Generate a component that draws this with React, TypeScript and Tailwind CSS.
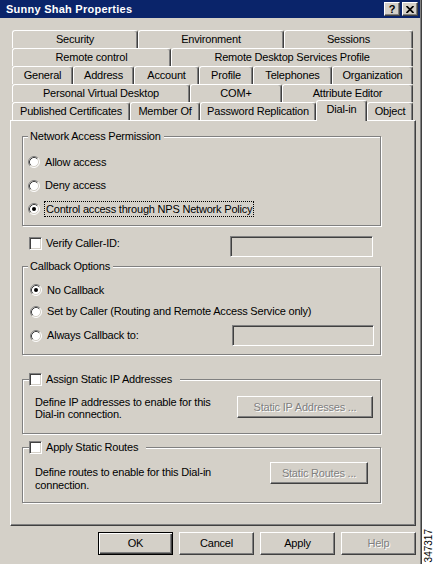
import React from 'react'

const raised =
  'border border-t-white border-l-white border-r-[#404040] border-b-[#404040] shadow-[inset_-1px_-1px_0_#808080]'
const sunken =
  'border border-t-[#808080] border-l-[#808080] border-r-white border-b-white shadow-[inset_1px_1px_0_#404040,inset_-1px_-1px_0_#d4d0c8]'
const etched = 'border border-[#808080] shadow-[1px_1px_0_#fff,inset_1px_1px_0_#fff]'
const disabledText = 'text-[#808080] [text-shadow:1px_1px_0_#fff]'

const Radio = ({ checked }: { checked?: boolean }) => (
  <svg width="12" height="12" viewBox="0 0 12 12" className="shrink-0">
    <circle cx="6" cy="6" r="5" fill="#fff" />
    <path d="M2.11 9.89 A5.5 5.5 0 0 1 9.89 2.11" fill="none" stroke="#808080" />
    <path d="M9.89 2.11 A5.5 5.5 0 0 1 2.11 9.89" fill="none" stroke="#fff" />
    <path d="M2.82 9.18 A4.5 4.5 0 0 1 9.18 2.82" fill="none" stroke="#404040" />
    <path d="M9.18 2.82 A4.5 4.5 0 0 1 2.82 9.18" fill="none" stroke="#d4d0c8" />
    {checked && <circle cx="6" cy="6" r="2" fill="#000" />}
  </svg>
)

const Checkbox = () => <div className={`w-[13px] h-[13px] shrink-0 bg-white ${sunken}`} />

const Tab = ({
  label,
  width,
  active,
}: {
  label: string
  width: string
  active?: boolean
}) => (
  <div
    className={`${width} ${
      active ? 'relative z-10 -mt-[2px] h-[21px] pb-[3px]' : 'h-[18px]'
    } flex items-center justify-center bg-[#d4d0c8] border-l border-t border-r border-l-white border-t-white border-r-[#404040] shadow-[inset_-1px_0_0_#808080] rounded-t-[3px] whitespace-nowrap`}
  >
    {label}
  </div>
)

const Button = ({
  label,
  width,
  height,
  disabled,
  isDefault,
}: {
  label: string
  width: string
  height: string
  disabled?: boolean
  isDefault?: boolean
}) => (
  <div
    className={`${width} ${height} shrink-0 flex items-center justify-center ${
      isDefault
        ? 'border border-black shadow-[inset_1px_1px_0_#fff,inset_-1px_-1px_0_#404040,inset_-2px_-2px_0_#808080]'
        : raised
    } ${disabled ? disabledText : ''}`}
  >
    {label}
  </div>
)

const rows: { label: string; width: string; active?: boolean }[][] = [
  [
    { label: 'Security', width: 'w-[126px]' },
    { label: 'Environment', width: 'w-[146px]' },
    { label: 'Sessions', width: 'w-[129px]' },
  ],
  [
    { label: 'Remote control', width: 'w-[159px]' },
    { label: 'Remote Desktop Services Profile', width: 'w-[242px]' },
  ],
  [
    { label: 'General', width: 'w-[61px]' },
    { label: 'Address', width: 'w-[61px]' },
    { label: 'Account', width: 'w-[65px]' },
    { label: 'Profile', width: 'w-[54px]' },
    { label: 'Telephones', width: 'w-[79px]' },
    { label: 'Organization', width: 'w-[81px]' },
  ],
  [
    { label: 'Personal Virtual Desktop', width: 'w-[178px]' },
    { label: 'COM+', width: 'w-[92px]' },
    { label: 'Attribute Editor', width: 'w-[131px]' },
  ],
  [
    { label: 'Published Certificates', width: 'w-[118px]' },
    { label: 'Member Of', width: 'w-[70px]' },
    { label: 'Password Replication', width: 'w-[116px]' },
    { label: 'Dial-in', width: 'w-[51px]', active: true },
    { label: 'Object', width: 'w-[46px]' },
  ],
]

const App: React.FC = () => {
  return (
    <div className="w-[435px] h-[564px] bg-white flex font-['Liberation_Sans',Arial,sans-serif] text-[11px] tracking-[-0.2px] text-black overflow-hidden">
      <div className="w-[422px] h-full bg-[#d4d0c8] border-r border-r-[#404040] shadow-[inset_-1px_0_0_#808080] flex flex-col">
        {/* title bar */}
        <div className="w-[420px] h-[18px] bg-[#0a246a] flex items-center justify-between pl-[6px] pr-[2px]">
          <span className="text-white font-bold tracking-[0.25px]">Sunny Shah Properties</span>
          <div className="flex gap-[2px]">
            <div
              className={`w-[16px] h-[14px] bg-[#d4d0c8] ${raised} flex items-center justify-center font-bold text-[11px] leading-none tracking-normal`}
            >
              ?
            </div>
            <div className={`w-[16px] h-[14px] bg-[#d4d0c8] ${raised} flex items-center justify-center`}>
              <svg width="8" height="7" viewBox="0 0 8 7">
                <path d="M0.5 0 L7.5 7 M7.5 0 L0.5 7" stroke="#000" strokeWidth="1.7" />
              </svg>
            </div>
          </div>
        </div>

        {/* tabs */}
        <div className="pt-[12px] ml-[12px] flex flex-col">
          {rows.map((row, i) => (
            <div key={i} className="flex h-[18px]">
              {row.map((t) => (
                <Tab key={t.label} label={t.label} width={t.width} active={t.active} />
              ))}
            </div>
          ))}
        </div>

        {/* panel */}
        <div className="ml-[10px] w-[406px] h-[406px] border border-t-white border-l-white border-r-[#404040] border-b-[#404040] shadow-[inset_-1px_-1px_0_#808080] pl-[11px] flex flex-col">
          <div className={`mt-[15px] w-[359px] ${etched} pb-[5px]`}>
            <div className="-mt-[7px] ml-[5px] w-fit bg-[#d4d0c8] pl-[2px] pr-[3px] leading-[13px]">
              Network Access Permission
            </div>
            <div className="pt-[7px] flex flex-col">
              <div className="h-[24px] flex items-center pl-[5px] gap-[5px]">
                <Radio />
                <span>Allow access</span>
              </div>
              <div className="h-[23px] flex items-center pl-[5px] gap-[5px]">
                <Radio />
                <span>Deny access</span>
              </div>
              <div className="h-[23px] flex items-center pl-[5px] gap-[4px]">
                <Radio checked />
                <span className="border border-dotted border-black px-[1px] leading-[14px]">
                  Control access through NPS Network Policy
                </span>
              </div>
            </div>
          </div>

          <div className="mt-[10px] w-[359px] h-[21px] flex items-start">
            <div className="mt-[1px] ml-[7px] flex items-center gap-[4px] leading-[13px]">
              <Checkbox />
              <span>Verify Caller-ID:</span>
            </div>
            <div className="flex-1" />
            <div className={`w-[143px] h-[21px] mr-[8px] ${sunken}`} />
          </div>

          <div className={`mt-[9px] w-[359px] ${etched} pb-[8px]`}>
            <div className="-mt-[7px] ml-[5px] w-fit bg-[#d4d0c8] pl-[2px] pr-[3px] leading-[13px]">
              Callback Options
            </div>
            <div className="pt-[6px] flex flex-col">
              <div className="h-[22px] flex items-center pl-[7px] gap-[5px]">
                <Radio checked />
                <span>No Callback</span>
              </div>
              <div className="h-[21px] flex items-center pl-[7px] gap-[5px]">
                <Radio />
                <span>Set by Caller (Routing and Remote Access Service only)</span>
              </div>
              <div className="mt-[3px] h-[21px] flex items-center pl-[7px] gap-[5px]">
                <Radio />
                <span>Always Callback to:</span>
                <div className="flex-1" />
                <div className={`w-[142px] h-[21px] mr-[6px] ${sunken}`} />
              </div>
            </div>
          </div>

          <div className={`mt-[24px] w-[359px] ${etched} pb-[13px]`}>
            <div className="-mt-[7px] ml-[6px] w-fit bg-[#d4d0c8] pr-[8px] flex items-center gap-[4px] leading-[13px]">
              <Checkbox />
              <span>Assign Static IP Addresses</span>
            </div>
            <div className="mt-[10px] pl-[12px] flex items-start">
              <div className="leading-[12px]">
                <div>Define IP addresses to enable for this</div>
                <div>Dial-in connection.</div>
              </div>
              <div className="flex-1" />
              <div className="mr-[7px]">
                <Button label="Static IP Addresses ..." width="w-[136px]" height="h-[22px]" disabled />
              </div>
            </div>
          </div>

          <div className={`mt-[13px] w-[359px] ${etched} pb-[10px]`}>
            <div className="-mt-[7px] ml-[6px] w-fit bg-[#d4d0c8] pr-[8px] flex items-center gap-[4px] leading-[13px]">
              <Checkbox />
              <span>Apply Static Routes</span>
            </div>
            <div className="mt-[8px] pl-[12px] flex items-start">
              <div className="mt-[4px] leading-[13px]">
                <div>Define routes to enable for this Dial-in</div>
                <div>connection.</div>
              </div>
              <div className="flex-1" />
              <div className="mr-[12px]">
                <Button label="Static Routes ..." width="w-[98px]" height="h-[22px]" disabled />
              </div>
            </div>
          </div>
        </div>

        {/* dialog buttons */}
        <div className="mt-[6px] ml-[10px] w-[406px] flex justify-end gap-[6px]">
          <Button label="OK" width="w-[75px]" height="h-[23px]" isDefault />
          <Button label="Cancel" width="w-[75px]" height="h-[23px]" />
          <Button label="Apply" width="w-[75px]" height="h-[23px]" />
          <Button label="Help" width="w-[75px]" height="h-[23px]" disabled />
        </div>
      </div>

      <div className="flex-1 flex items-end justify-center pb-[2px]">
        <span className="[writing-mode:vertical-rl] rotate-180 text-[10px] leading-none tracking-normal">
          347317
        </span>
      </div>
    </div>
  )
}

export default App
